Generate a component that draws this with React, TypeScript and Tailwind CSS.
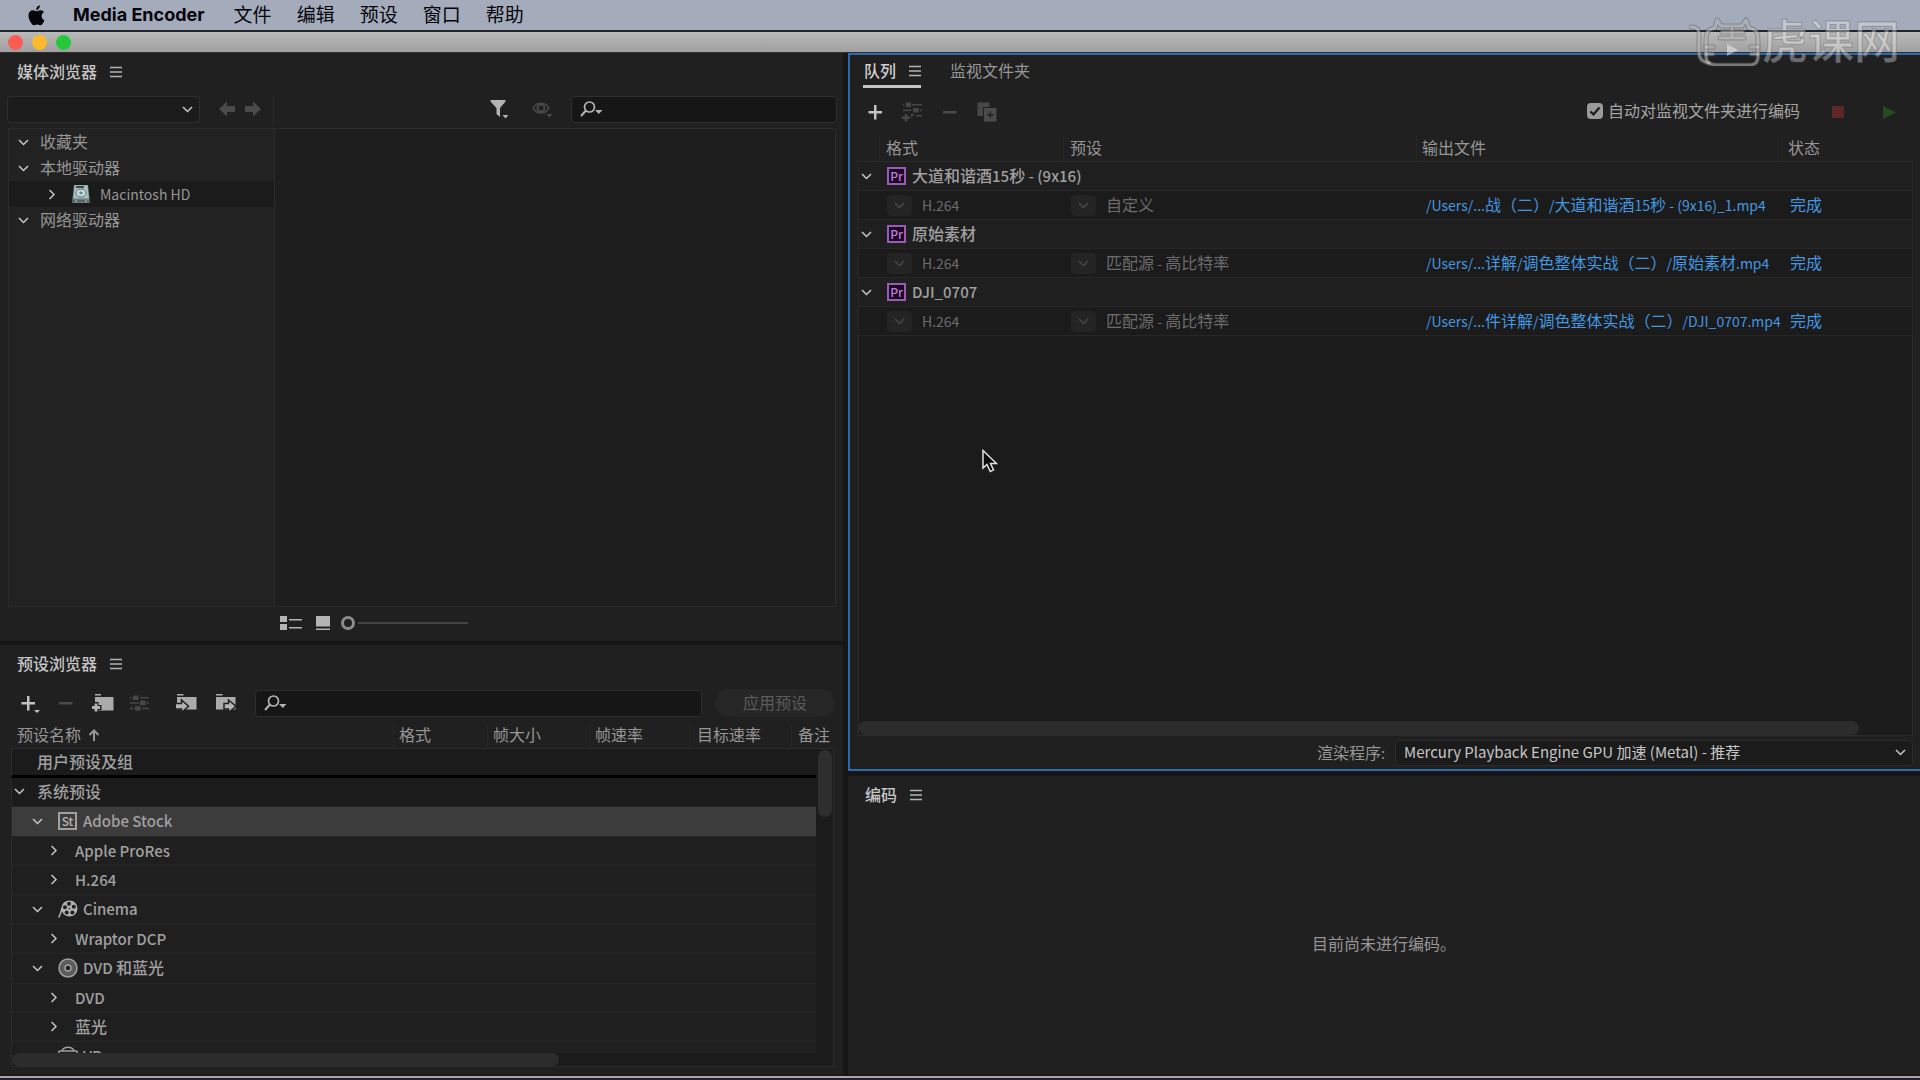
import { useState } from "react"
import type { ReactNode } from "react"

type PresetKind = "group" | "parent" | "child"

type Preset = {
  name: string
  kind: PresetKind
  icon?: ReactNode
}

type Job = {
  name: string
  preset: string
  output: string
}

const menus = ["文件", "编辑", "预设", "窗口", "帮助"]

const jobs: Job[] = [
  {
    name: "大道和谐酒15秒 - (9x16)",
    preset: "自定义",
    output: "/Users/...战（二）/大道和谐酒15秒 - (9x16)_1.mp4",
  },
  {
    name: "原始素材",
    preset: "匹配源 - 高比特率",
    output: "/Users/...详解/调色整体实战（二）/原始素材.mp4",
  },
  {
    name: "DJI_0707",
    preset: "匹配源 - 高比特率",
    output: "/Users/...件详解/调色整体实战（二）/DJI_0707.mp4",
  },
]

// latin runs are set a little smaller than the Chinese around them
function Label({ text, strong = false, className = "" }: { text: string; strong?: boolean; className?: string }) {
  return (
    <span className={`whitespace-pre ${className}`}>
      {text.split(/([\x20-\x7e]+)/).map((part, i) =>
        i % 2 === 1 ? (
          <span key={i} className={`leading-none font-['Noto_Sans_CJK_SC',sans-serif] ${strong ? "text-[15px]" : "text-[14px]"}`}>
            {part}
          </span>
        ) : (
          part
        )
      )}
    </span>
  )
}

/* ICONS */

function Chevron({ right = false, className = "" }: { right?: boolean; className?: string }) {
  return (
    <svg viewBox="0 0 11 11" className={`w-[11px] h-[11px] shrink-0 ${className}`} fill="none" stroke="currentColor" strokeWidth="1.5">
      {right ? <path d="M3.5 1 L8 5.5 L3.5 10" /> : <path d="M1 3 L5.5 7.5 L10 3" />}
    </svg>
  )
}

function Hamburger() {
  return (
    <svg viewBox="0 0 12 12" className="w-3 h-3" stroke="#b4b4b4" strokeWidth="1.5">
      <path d="M0 1.5H12M0 6H12M0 10.5H12" />
    </svg>
  )
}

function AppleLogo() {
  return (
    <svg viewBox="0 0 17 21" className="w-[17px] h-[21px]" fill="#05050a">
      <path d="M11.9 0.2C12 1.6 11.4 2.9 10.6 3.8C9.9 4.7 8.8 5.2 8.3 5.1C8.1 3.8 8.7 2.5 9.5 1.6C10.2 0.8 11.2 0.3 11.9 0.2Z" />
      <path d="M16.4 15.3C15.9 16.8 15 18.4 14 19.5C13.2 20.4 12.3 20.5 11.3 20.1C9.8 19.4 8.5 19.4 7 20.1C5.9 20.6 5.1 20.4 4.3 19.5C1.9 16.9 0.2 12.9 0.5 9.8C0.8 6.9 2.7 5.3 4.9 5.3C6.3 5.3 7.4 6.2 8.5 6.2C9.5 6.2 10.8 5.2 12.6 5.3C14 5.4 15.2 6 16 7.2C14.3 8.3 13.5 9.6 13.6 11.3C13.7 13.1 14.7 14.6 16.4 15.3Z" />
    </svg>
  )
}

function Arrow({ flip = false }: { flip?: boolean }) {
  return (
    <svg viewBox="0 0 16 16" className={`w-4 h-4 ${flip ? "rotate-180" : ""}`} fill="#4b4b4b">
      <path d="M0 8L8 0.5V5H16V11H8V15.5Z" />
    </svg>
  )
}

function Funnel() {
  return (
    <svg viewBox="0 0 20 20" className="w-5 h-5" fill="#b4b4b4">
      <path d="M0.5 1H15.5V2.5L10 9V18L6.5 15V9L0.5 2.5Z" />
      <path d="M12.5 16H18.5L15.5 19.5Z" />
    </svg>
  )
}

function Eye() {
  return (
    <svg viewBox="0 0 21 18" className="w-[21px] h-[18px]" fill="none">
      <path d="M1 8C5 1.5 13 1.5 17 8C13 14.5 5 14.5 1 8Z" stroke="#484848" strokeWidth="1.5" />
      <circle cx="9" cy="8" r="3.5" stroke="#484848" strokeWidth="2" />
      <path d="M14.5 14H20.5L17.5 17.5Z" fill="#484848" />
    </svg>
  )
}

function Magnifier() {
  return (
    <svg viewBox="0 0 23 16" className="w-[23px] h-4" fill="none" stroke="#b4b4b4">
      <circle cx="9.5" cy="6" r="5" strokeWidth="1.7" />
      <path d="M6 9.5L1 15" strokeWidth="2" />
      <path d="M15 9H22.5L18.75 13Z" fill="#b4b4b4" stroke="none" />
    </svg>
  )
}

function Plus({ menu = false }: { menu?: boolean }) {
  return (
    <svg viewBox="0 0 20 20" className="w-5 h-5" fill="#c2c2c2">
      <path d="M6 3H8.5V9H14V11.5H8.5V17.5H6V11.5H0.5V9H6Z" />
      {menu && <path d="M13 17H19L16 20Z" />}
    </svg>
  )
}

function Minus() {
  return (
    <svg viewBox="0 0 14 20" className="w-[14px] h-5" fill="#4a4a4a">
      <path d="M0 9H13.5V11.5H0Z" />
    </svg>
  )
}

function FolderPlus() {
  return (
    <svg viewBox="0 0 22 20" className="w-[22px] h-5">
      <path d="M3 1H9V2.5H3ZM3 4H21.5V17.5H3Z" fill="#ababab" />
      <path d="M4 9V20M0 14.5H9.5" stroke="#202020" strokeWidth="5" />
      <path d="M4 10.5V18.5M0 14.5H8" stroke="#b4b4b4" strokeWidth="2.8" />
    </svg>
  )
}

function FolderArrow({ out = false }: { out?: boolean }) {
  return (
    <svg viewBox="0 0 21 20" className="w-[21px] h-5">
      <path d="M1 1H7.5V2.5H1ZM1 4H20.5V16.5H1Z" fill="#ababab" />
      {out ? (
        <path d="M9 10.5H13.5V7L21 13.2L13.5 19.5V16H9Z" fill="#b4b4b4" stroke="#202020" strokeWidth="1.5" />
      ) : (
        <path d="M-1 10.5H5.5V7L12.5 13.2L5.5 19.5V16H-1Z" fill="#b4b4b4" stroke="#202020" strokeWidth="1.5" />
      )}
    </svg>
  )
}

function Sliders() {
  return (
    <svg viewBox="0 0 19 18" className="w-[19px] h-[18px]" fill="#474747">
      <path d="M0 3H1.5V4.5H0ZM10 3H19V4.5H10ZM0 8.3H9V9.8H0ZM16.5 8.3H19V9.8H16.5ZM0 13.7H3.5V15.2H0ZM12 13.7H19V15.2H12Z" />
      <path d="M3 1.5H8.5V6H3ZM10 6.8H15.5V11.3H10ZM5 12.2H10.5V16.7H5Z" />
    </svg>
  )
}

function SlidersPlus() {
  return (
    <svg viewBox="0 0 20 20" className="w-5 h-5" fill="#474747">
      <path d="M1 2H2.5V3.5H1ZM10 2H20V3.5H10ZM1 7.5H9.5V9H1ZM17.5 7.5H20V9H17.5ZM9 12H12V13.5H10.5V15H9ZM14 13H20V14.5H14Z" />
      <path d="M4 0.5H9V5H4ZM11 6H16.5V10.5H11Z" />
      <path d="M2.8 12H5.3V14.5H8V17H5.3V19.5H2.8V17H0V14.5H2.8Z" />
    </svg>
  )
}

function Duplicate() {
  return (
    <svg viewBox="0 0 20 20" className="w-5 h-5">
      <path d="M0.5 0.5H12.5V5H6V14H0.5Z" fill="#474747" />
      <rect x="7" y="6" width="12.5" height="13.5" fill="#4b4b4b" />
      <path d="M13.2 9.5V16M10 12.75H16.5" stroke="#202020" strokeWidth="1.3" />
    </svg>
  )
}

function HardDisk() {
  return (
    <svg viewBox="0 0 18 20" className="w-[18px] h-5">
      <path d="M2 1H16L17.5 15V19H0.5V15Z" fill="#84999d" />
      <path d="M3 1.5H15.5L16.5 14H1.5Z" fill="#a9bfc2" />
      <rect x="4" y="2" width="8" height="2" fill="#3d4b50" />
      <ellipse cx="9" cy="9" rx="5" ry="4" fill="#cbdde0" stroke="#5f757a" />
      <ellipse cx="9" cy="9" rx="1.8" ry="1.4" fill="#6f868b" />
      <path d="M1 15.5H17V18.5H1Z" fill="#566468" />
      <path d="M3 17H5M13 17H15" stroke="#b9c8ca" />
    </svg>
  )
}

function FilmReel() {
  return (
    <svg viewBox="0 0 20 18" className="w-5 h-[18px]">
      <path d="M0.5 17.5C3.5 14 3 7 7 2.5" stroke="#b0b0b0" strokeWidth="1.5" fill="none" />
      <circle cx="11.5" cy="8.5" r="8" fill="#b0b0b0" />
      <g fill="#1f1f1f">
        <circle cx="11" cy="3.8" r="2" />
        <circle cx="15.8" cy="6.8" r="2" />
        <circle cx="14.4" cy="12.4" r="2" />
        <circle cx="8.7" cy="12.6" r="2" />
        <circle cx="7" cy="7.2" r="2" />
        <circle cx="11.4" cy="8.6" r="0.8" />
      </g>
    </svg>
  )
}

function Disc() {
  return (
    <svg viewBox="0 0 20 20" className="w-5 h-5">
      <circle cx="10" cy="10" r="9" fill="#5c5c5c" stroke="#a0a0a0" strokeWidth="1.5" />
      <circle cx="10" cy="10" r="3" fill="#1f1f1f" stroke="#a0a0a0" strokeWidth="1.5" />
    </svg>
  )
}

function Headset() {
  return (
    <svg viewBox="0 0 20 20" className="w-5 h-5" fill="none" stroke="#a0a0a0" strokeWidth="1.5">
      <path d="M4 5C6 0 14 0 16 5" />
      <rect x="0.5" y="5" width="19" height="11" rx="2" />
    </svg>
  )
}

function AppBadge({ label, purple = false }: { label: string; purple?: boolean }) {
  return (
    <span
      className={`flex w-[19px] h-[18px] shrink-0 items-center justify-center text-xs font-medium leading-3 font-['Noto_Sans_CJK_SC',sans-serif] ${
        purple ? "border-2 border-[#9a5bb5] bg-[#1c0524] text-[#c07fdb]" : "border-2 border-[#a0a0a0] text-[#b4b4b4]"
      }`}
    >
      {label}
    </span>
  )
}

function Watermark() {
  return (
    <div className="pointer-events-none absolute top-4 right-5 flex items-center gap-px">
      <svg viewBox="0 0 72 50" className="w-[72px] h-[50px]" fill="none" strokeLinecap="round" strokeLinejoin="round">
        {["#50505066", "#ffffff58"].map((color, i) => (
          <g key={color} stroke={color} strokeWidth={i === 0 ? 5 : 3}>
            <path d="M2 11C8 11 10 13 10 18V36C10 42 13 46 20 47" />
            <path d="M17 24C17 15 20 13 26 12L28 4L32 10H53L57 4L60 12C67 13 69 16 69 24V40C69 47 66 49 59 49H28C20 49 17 46 17 40Z" />
            <path d="M33 16H54M43 12V21M31 22H55M17 31H24M17 38H24M62 31H69M62 38H69" />
          </g>
        ))}
        <path d="M38 28L49 34L38 40Z" fill="#ffffff70" />
      </svg>
      <span className="text-[46px] font-medium leading-[50px] text-white/35 [-webkit-text-stroke:1px_rgba(90,90,90,0.4)]">虎课网</span>
    </div>
  )
}

/* PANELS */

function PanelTitle({ children }: { children: string }) {
  return (
    <div className="flex h-[37px] shrink-0 items-center gap-[13px] pl-[17px]">
      <h2 className="font-medium text-[#c6c6c6]">{children}</h2>
      <button aria-label={`${children}菜单`}>
        <Hamburger />
      </button>
    </div>
  )
}

function SearchBox({ label, className }: { label: string; className: string }) {
  return (
    <div className={`relative ${className}`}>
      <span className="absolute left-[9px] top-[5px]">
        <Magnifier />
      </span>
      <input
        type="text"
        aria-label={label}
        className="block w-full h-[27px] rounded-sm border border-[#2e2e2e] bg-[#161616] pl-9 text-[#b4b4b4] outline-none"
      />
    </div>
  )
}

function MediaBrowser() {
  const [zoom, setZoom] = useState(0)

  return (
    <section className="flex min-h-0 flex-col bg-[#202020]">
      <PanelTitle>媒体浏览器</PanelTitle>

      <div className="flex h-[38px] shrink-0 items-center pl-[7px] pr-[6px]">
        <div className="relative w-[193px]">
          <select aria-label="位置" className="block h-[27px] w-full appearance-none rounded-sm border border-[#2e2e2e] bg-[#1b1b1b]">
            <option></option>
          </select>
          <Chevron className="pointer-events-none absolute right-[7px] top-2 text-[#c6c6c6]" />
        </div>
        <div className="flex flex-1 items-center gap-[10px] pl-[19px]">
          <button aria-label="后退" disabled><Arrow /></button>
          <button aria-label="前进" disabled><Arrow flip /></button>
          <span className="ml-[2px] h-7 w-px bg-[#2b2b2b]" />
        </div>
        <div className="flex items-center gap-[22px] pr-[18px]">
          <button aria-label="过滤器"><Funnel /></button>
          <button aria-label="查看" disabled><Eye /></button>
        </div>
        <SearchBox label="搜索媒体" className="w-[266px]" />
      </div>

      <div className="ml-2 mr-[7px] flex flex-1 border border-[#2b2b2b] bg-[#1e1e1e]">
        <ul className="w-[266px] border-r border-[#2b2b2b] bg-[#222222] text-[#969696]">
          <li className="flex h-[26px] items-center gap-[11px] pl-[9px]"><Chevron className="text-[#c6c6c6]" />收藏夹</li>
          <li className="flex h-[26px] items-center gap-[11px] pl-[9px]"><Chevron className="text-[#c6c6c6]" />本地驱动器</li>
          <li className="flex h-[26px] items-center bg-[#1b1b1b] pl-[37px]">
            <Chevron right className="mr-[15px] text-[#c6c6c6]" />
            <HardDisk />
            <Label text="Macintosh HD" className="ml-[10px]" />
          </li>
          <li className="flex h-[26px] items-center gap-[11px] pl-[9px]"><Chevron className="text-[#c6c6c6]" />网络驱动器</li>
        </ul>
      </div>

      <div className="flex h-[34px] shrink-0 items-center pb-[3px] pl-[280px]">
        <button aria-label="列表视图">
          <svg viewBox="0 0 22 14" className="w-[22px] h-[14px]" fill="#b4b4b4">
            <path d="M0 0H7V6H0ZM0 8H7V14H0ZM9 3H22V4.5H9ZM9 11H22V12.5H9Z" />
          </svg>
        </button>
        <button aria-label="缩略图视图" className="ml-[14px]">
          <svg viewBox="0 0 14 14" className="w-[14px] h-[14px]" fill="#b4b4b4">
            <path d="M0 0H14V10.5H0ZM0 12.5H14V14H0Z" />
          </svg>
        </button>
        <input
          type="range"
          aria-label="缩放"
          min={0}
          max={100}
          value={zoom}
          onChange={(e) => setZoom(Number(e.target.value))}
          className="ml-[11px] h-[14px] w-[127px] appearance-none bg-transparent bg-[linear-gradient(#454545,#454545)] bg-[length:110px_2px] bg-right bg-no-repeat [&::-webkit-slider-thumb]:h-[14px] [&::-webkit-slider-thumb]:w-[14px] [&::-webkit-slider-thumb]:appearance-none [&::-webkit-slider-thumb]:rounded-full [&::-webkit-slider-thumb]:border-[3px] [&::-webkit-slider-thumb]:border-[#8c8c8c] [&::-webkit-slider-thumb]:bg-[#202020]"
        />
      </div>
    </section>
  )
}

const presets: Preset[] = [
  { name: "系统预设", kind: "group" },
  { name: "Adobe Stock", kind: "parent", icon: <AppBadge label="St" /> },
  { name: "Apple ProRes", kind: "child" },
  { name: "H.264", kind: "child" },
  { name: "Cinema", kind: "parent", icon: <FilmReel /> },
  { name: "Wraptor DCP", kind: "child" },
  { name: "DVD 和蓝光", kind: "parent", icon: <Disc /> },
  { name: "DVD", kind: "child" },
  { name: "蓝光", kind: "child" },
  { name: "VR", kind: "parent", icon: <Headset /> },
]

const rowStyle: Record<PresetKind, string> = {
  group: "h-[29px] bg-[#1b1b1b]",
  parent: "h-[30px] bg-[#1f1f1f]",
  child: "h-[29px] bg-[#1f1f1f]",
}

const indent: Record<PresetKind, string> = {
  group: "pl-[2px]",
  parent: "pl-5",
  child: "pl-9",
}

const chevronGap: Record<PresetKind, string> = {
  group: "mr-3",
  parent: "mr-[15px]",
  child: "mr-4",
}

function PresetBrowser() {
  const [selected, setSelected] = useState("Adobe Stock")

  return (
    <section className="flex min-h-0 flex-col bg-[#202020]">
      <PanelTitle>预设浏览器</PanelTitle>

      <div className="flex h-[42px] shrink-0 items-center pl-[21px] pr-2">
        <button aria-label="新建预设"><Plus menu /></button>
        <button aria-label="删除预设" disabled className="ml-[18px]"><Minus /></button>
        <button aria-label="新建预设组" className="ml-[19px]"><FolderPlus /></button>
        <button aria-label="预设设置" disabled className="ml-4"><Sliders /></button>
        <button aria-label="导入预设" className="ml-[27px]"><FolderArrow /></button>
        <button aria-label="导出预设" className="ml-[18px]"><FolderArrow out /></button>
        <SearchBox label="搜索预设" className="ml-[19px] flex-1" />
        <button disabled className="ml-[13px] h-7 w-[120px] rounded-full bg-[#262626] text-[#5c5c5c]">应用预设</button>
      </div>

      <div className="mb-2 ml-[11px] mr-[9px] flex min-h-0 flex-1 flex-col">
        <div className="relative min-h-0 flex-1 overflow-hidden">
          <table className="w-full table-fixed border-separate border-spacing-0">
            <colgroup>
              <col />
              <col className="w-[94px]" />
              <col className="w-[102px]" />
              <col className="w-[101px]" />
              <col className="w-[101px]" />
              <col className="w-[25px]" />
              <col className="w-[18px]" />
            </colgroup>
            <thead>
              <tr className="h-[25px] whitespace-nowrap text-left text-[#969696] [&>th]:border-b [&>th]:border-l-[#262626] [&>th]:border-b-[#2b2b2b] [&>th]:p-0 [&>th]:pb-[3px] [&>th]:font-normal [&>th]:leading-[21px]">
                <th className="pl-[6px]!">
                  <span className="flex items-center gap-[7px]">
                    预设名称
                    <svg viewBox="0 0 12 12" className="w-3 h-3" fill="none" stroke="#969696" strokeWidth="2">
                      <path d="M6 12V2M1.5 6L6 1.5L10.5 6" />
                    </svg>
                  </span>
                </th>
                <th className="border-l pl-[5px]!">格式</th>
                <th className="border-l pl-[5px]!">帧大小</th>
                <th className="border-l pl-[5px]!">帧速率</th>
                <th className="border-l pl-[6px]!">目标速率</th>
                <th colSpan={2} className="border-l pl-[6px]!">备注</th>
              </tr>
            </thead>
            <tbody className="font-medium text-[#a0a0a0]">
              <tr className="h-[29px] bg-[#1b1b1b]">
                <td colSpan={6} className="border-b-[3px] border-l border-b-black border-l-[#2b2b2b] p-0 pl-[25px] leading-6">用户预设及组</td>
                <td className="border-r border-[#2b2b2b] p-0"></td>
              </tr>
              {presets.map((p) => (
                <tr key={p.name} onClick={() => setSelected(p.name)} className={rowStyle[p.kind]}>
                  <td
                    colSpan={6}
                    className={`border-b border-l border-b-[#272727] border-l-[#2b2b2b] p-0 pb-px leading-6 ${
                      selected === p.name ? "bg-[#3c3c3c]" : ""
                    }`}
                  >
                    <div className={`flex items-center ${indent[p.kind]}`}>
                      <Chevron right={p.kind === "child"} className={`text-[#c6c6c6] ${chevronGap[p.kind]}`} />
                      {p.icon && <span className="mr-[5px] flex w-5">{p.icon}</span>}
                      <Label strong text={p.name} />
                    </div>
                  </td>
                  <td className="border-r border-[#2b2b2b] bg-[#1b1b1b] p-0"></td>
                </tr>
              ))}
            </tbody>
          </table>
          <div className="absolute right-[2px] top-[26px] h-[67px] w-[14px] rounded-full bg-[#2e2e2e]" />
        </div>
        <div className="h-[14px] shrink-0 border-x border-b border-[#2b2b2b] bg-[#1b1b1b]">
          <div className="h-[13px] w-2/3 rounded-full bg-[#2c2c2c]" />
        </div>
      </div>
    </section>
  )
}

function DropButton({ label }: { label: string }) {
  return (
    <button aria-label={label} disabled className="flex h-[21px] w-[25px] shrink-0 items-center justify-center rounded-sm bg-[#242424] text-[#484848]">
      <Chevron />
    </button>
  )
}

function Queue() {
  const [auto, setAuto] = useState(true)

  return (
    <section className="flex min-h-0 flex-col border-y-2 border-l-2 border-[#2f69b0] bg-[#202020]">
      <div className="flex h-[33px] shrink-0 items-stretch gap-[29px] pl-[13px]">
        <div className="flex items-center gap-[13px] border-b-[3px] border-[#c6c6c6] pt-[2px]">
          <button className="pl-px font-medium text-[#d0d0d0]">队列</button>
          <button aria-label="队列菜单"><Hamburger /></button>
        </div>
        <button className="border-b-[3px] border-transparent pt-[2px] text-[#969696]">监视文件夹</button>
      </div>

      <div className="flex h-12 shrink-0 items-center pl-[18px] pr-6">
        <button aria-label="添加源"><Plus /></button>
        <button aria-label="添加输出" disabled className="ml-[14px]"><SlidersPlus /></button>
        <button aria-label="移除" disabled className="ml-[21px]"><Minus /></button>
        <button aria-label="重复" disabled className="ml-5"><Duplicate /></button>
        <label className="ml-auto flex items-center gap-[5px] pb-[2px] text-[#a4a4a4]">
          <span className="relative flex">
            <input
              type="checkbox"
              checked={auto}
              onChange={(e) => setAuto(e.target.checked)}
              className="h-4 w-4 appearance-none rounded-sm bg-[#9a9a9a]"
            />
            {auto && (
              <svg viewBox="0 0 16 16" className="pointer-events-none absolute inset-0 w-4 h-4" fill="none" stroke="#1b1b1b" strokeWidth="2.2">
                <path d="M3.5 8.5L6.5 11.5L12.5 4.5" />
              </svg>
            )}
          </span>
          自动对监视文件夹进行编码
        </label>
        <button aria-label="停止队列" disabled className="ml-8 h-3 w-3 bg-[#5e2626]" />
        <button aria-label="启动队列" disabled className="ml-[39px]">
          <svg viewBox="0 0 13 13" className="w-[13px] h-[13px]" fill="#234d20">
            <path d="M0 0L13 6.5L0 13Z" />
          </svg>
        </button>
      </div>

      <div className="ml-2 mr-[7px] flex min-h-0 flex-1 flex-col">
        <table className="w-full table-fixed border-separate border-spacing-0 whitespace-nowrap">
          <colgroup>
            <col className="w-[21px]" />
            <col className="w-[184px]" />
            <col />
            <col className="w-[365px]" />
            <col className="w-[132px]" />
          </colgroup>
          <thead>
            <tr className="h-[26px] text-left text-[#969696] [&>th]:border-b [&>th]:border-l-[#262626] [&>th]:border-b-[#2b2b2b] [&>th]:p-0 [&>th]:pb-[3px] [&>th]:font-normal [&>th]:leading-[21px]">
              <th></th>
              <th className="border-l pl-[6px]!">格式</th>
              <th className="border-l pl-[6px]!">预设</th>
              <th className="border-l pl-[5px]!">输出文件</th>
              <th className="border-l pl-[6px]!">状态</th>
            </tr>
          </thead>
          {jobs.map((job) => (
            <tbody key={job.name} className="[&_td]:border-b [&_td]:border-[#272727] [&_td]:p-0 [&_td]:leading-6">
              <tr className="h-[29px] bg-[#1f1f1f] font-medium text-[#a0a0a0]">
                <td className="border-l">
                  <Chevron className="ml-[2px] text-[#c6c6c6]" />
                </td>
                <td colSpan={4} className="border-r">
                  <div className="flex items-center gap-[6px] pl-2">
                    <AppBadge label="Pr" purple />
                    <Label strong text={job.name} />
                  </div>
                </td>
              </tr>
              <tr className="h-[29px] bg-[#1b1b1b] text-[#6c6c6c]">
                <td className="border-l"></td>
                <td>
                  <div className="flex items-center gap-[10px] pl-2">
                    <DropButton label="选择格式" />
                    <Label text="H.264" />
                  </div>
                </td>
                <td>
                  <div className="flex items-center gap-[10px] pl-2">
                    <DropButton label="选择预设" />
                    <Label text={job.preset} />
                  </div>
                </td>
                <td>
                  <a href="#" className="pl-[10px] text-[#4497e0]"><Label text={job.output} /></a>
                </td>
                <td className="border-r">
                  <a href="#" className="pl-[9px] text-[#4497e0]">完成</a>
                </td>
              </tr>
            </tbody>
          ))}
        </table>
        <div className="flex flex-1 items-end border-x border-b border-[#2b2b2b] bg-[#1b1b1b]">
          <div className="h-[14px] w-[95%] rounded-full bg-[#2c2c2c]" />
        </div>
      </div>

      <div className="flex h-[33px] shrink-0 items-center justify-end gap-[10px] pr-[7px]">
        <label htmlFor="renderer" className="text-[#969696]">渲染程序:</label>
        <div className="relative w-[518px]">
          <select
            id="renderer"
            className="block h-[26px] w-full appearance-none rounded-sm border border-[#2b2b2b] bg-[#1b1b1b] pl-2 text-[15px] text-[#c6c6c6] font-['Noto_Sans_CJK_SC',sans-serif]"
          >
            <option>Mercury Playback Engine GPU 加速 (Metal) - 推荐</option>
          </select>
          <Chevron className="pointer-events-none absolute right-[7px] top-[7px] text-[#c6c6c6]" />
        </div>
      </div>
    </section>
  )
}

function Encoding() {
  return (
    <section className="flex min-h-0 flex-col bg-[#202020]">
      <PanelTitle>编码</PanelTitle>
      <p className="flex flex-1 items-center justify-center text-[#969696]">目前尚未进行编码。</p>
    </section>
  )
}

export default function App() {
  return (
    <div className="relative flex h-screen min-h-[800px] flex-col overflow-hidden bg-[#161616] text-base font-['Lato','Noto_Sans_CJK_SC',sans-serif]">

      {/* MENU BAR */}
      <nav className="flex h-[30px] shrink-0 items-center bg-[#a4abba] pl-7 text-[19px] text-[#05050a]">
        <AppleLogo />
        <span className="ml-7 mr-[29px] text-lg font-bold font-['Inter',sans-serif]">Media Encoder</span>
        <div className="flex gap-[25px]">
          {menus.map((m) => (
            <button key={m}>{m}</button>
          ))}
        </div>
      </nav>

      {/* TITLE BAR */}
      <header className="flex h-[23px] shrink-0 items-center gap-[9px] border-b border-t-2 border-b-[#303030] border-t-[#20262a] bg-linear-to-b from-[#bababa] to-[#a0a0a0] pl-2">
        <button aria-label="关闭" className="h-[15px] w-[15px] rounded-full bg-[#fc5b56]" />
        <button aria-label="最小化" className="h-[15px] w-[15px] rounded-full bg-[#fdb92c]" />
        <button aria-label="缩放窗口" className="h-[15px] w-[15px] rounded-full bg-[#27c73a]" />
      </header>

      <main className="grid min-h-0 flex-1 grid-cols-[843fr_1072fr] gap-[5px]">
        <div className="grid min-h-0 grid-rows-[588fr_430fr] gap-1">
          <MediaBrowser />
          <PresetBrowser />
        </div>
        <div className="grid min-h-0 grid-rows-[718fr_299fr] gap-[5px]">
          <Queue />
          <Encoding />
        </div>
      </main>

      <footer className="mt-px h-1 shrink-0 border-t-2 border-[#a8a8a8] bg-[#221e30]" />

      <Watermark />

      {/* POINTER */}
      <svg viewBox="0 0 16 24" className="pointer-events-none absolute left-[982px] top-[449px] w-4 h-6" fill="#0a0a0a" stroke="#e0e0e0" strokeWidth="1.5">
        <path d="M1 1.5V19L5 15.5L8.3 22.5L11.5 21L8.5 14.5H14.5Z" />
      </svg>
    </div>
  )
}
